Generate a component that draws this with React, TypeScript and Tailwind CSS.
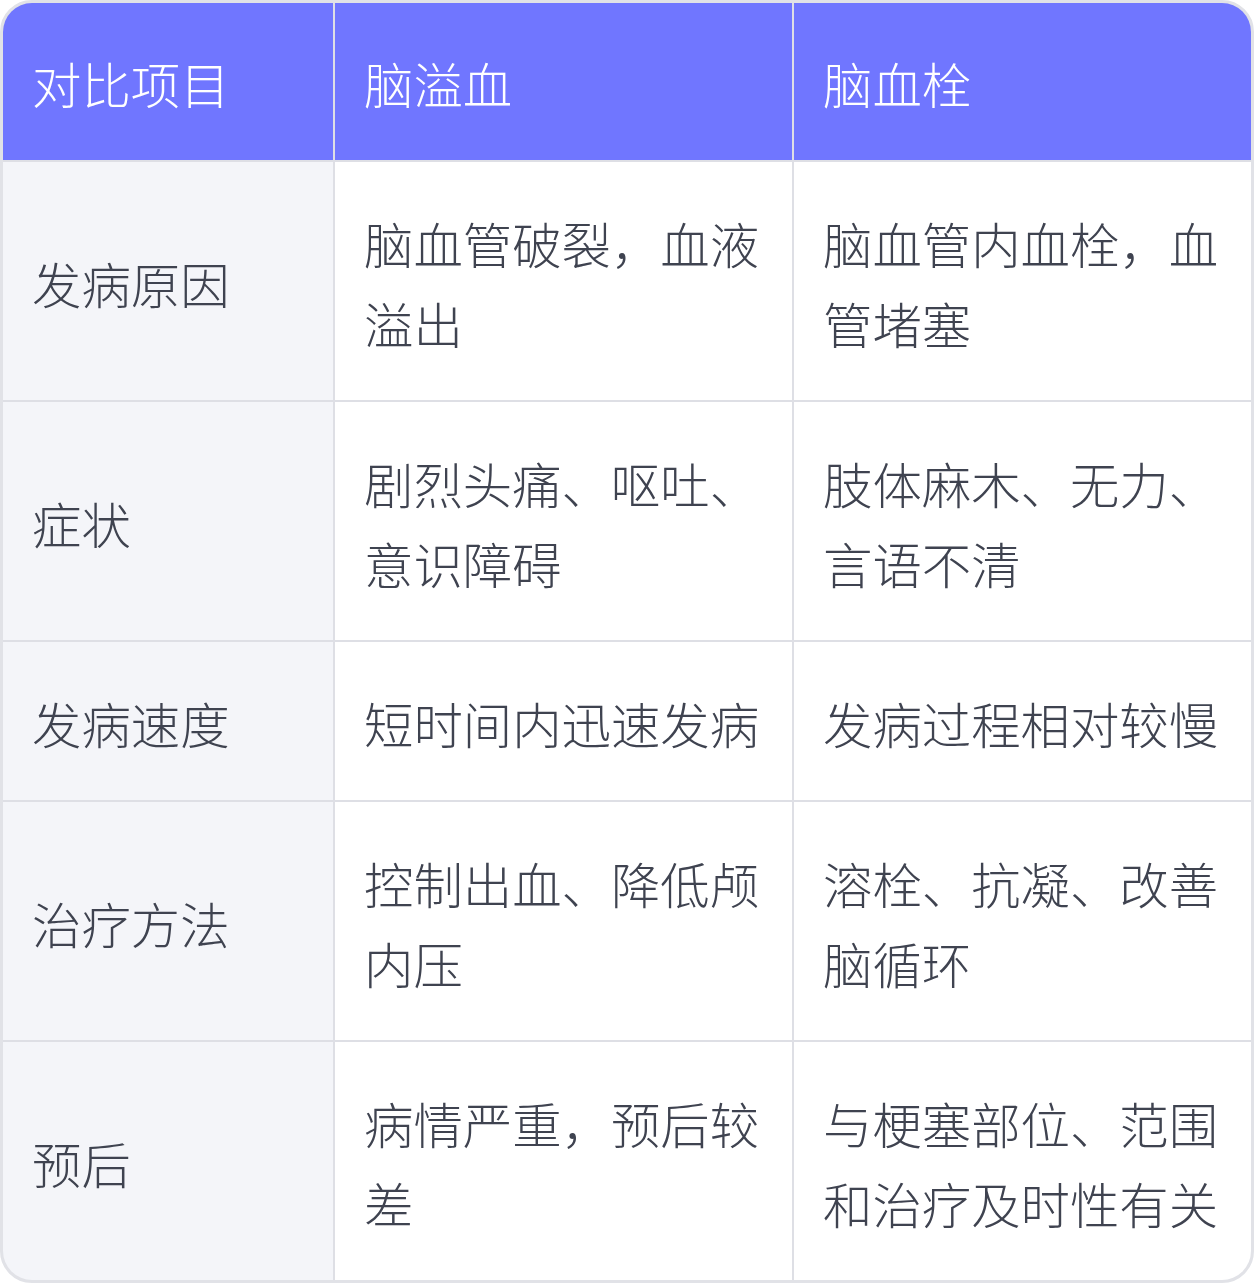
const rows = [
  { item: "发病原因", hemorrhage: "脑血管破裂，血液溢出", thrombus: "脑血管内血栓，血管堵塞" },
  { item: "症状", hemorrhage: "剧烈头痛、呕吐、意识障碍", thrombus: "肢体麻木、无力、言语不清" },
  { item: "发病速度", hemorrhage: "短时间内迅速发病", thrombus: "发病过程相对较慢" },
  { item: "治疗方法", hemorrhage: "控制出血、降低颅内压", thrombus: "溶栓、抗凝、改善脑循环" },
  { item: "预后", hemorrhage: "病情严重，预后较差", thrombus: "与梗塞部位、范围和治疗及时性有关" },
];

const font = { fontFamily: '"Noto Sans CJK SC", "Noto Sans", sans-serif' };

export default function App() {
  return (
    <div className="w-[1254px] h-[1283px] bg-white" style={font}>
      <div className="grid grid-cols-[330px_457px_457px] gap-[2px] bg-[#dedfe5] border-[3px] border-[#e1e2e7] rounded-[32px] overflow-hidden text-[49.4px] leading-[80px] font-light text-[#3f4350]">
        {/* Header */}
        {["对比项目", "脑溢血", "脑血栓"].map((h) => (
          <div key={h} className="bg-[#7076ff] text-white pl-[29px] pr-[20px] pt-[40px] pb-[37px]">
            {h}
          </div>
        ))}

        {/* Body */}
        {rows.map((r) => (
          <div key={r.item} className="contents">
            <div className="bg-[#f4f5f9] pl-[29px] pr-[20px] pt-[41px] pb-[37px] flex items-center">{r.item}</div>
            <div className="bg-white pl-[29px] pr-[20px] pt-[41px] pb-[37px] break-all">{r.hemorrhage}</div>
            <div className="bg-white pl-[29px] pr-[20px] pt-[41px] pb-[37px] break-all">{r.thrombus}</div>
          </div>
        ))}
      </div>
    </div>
  );
}
